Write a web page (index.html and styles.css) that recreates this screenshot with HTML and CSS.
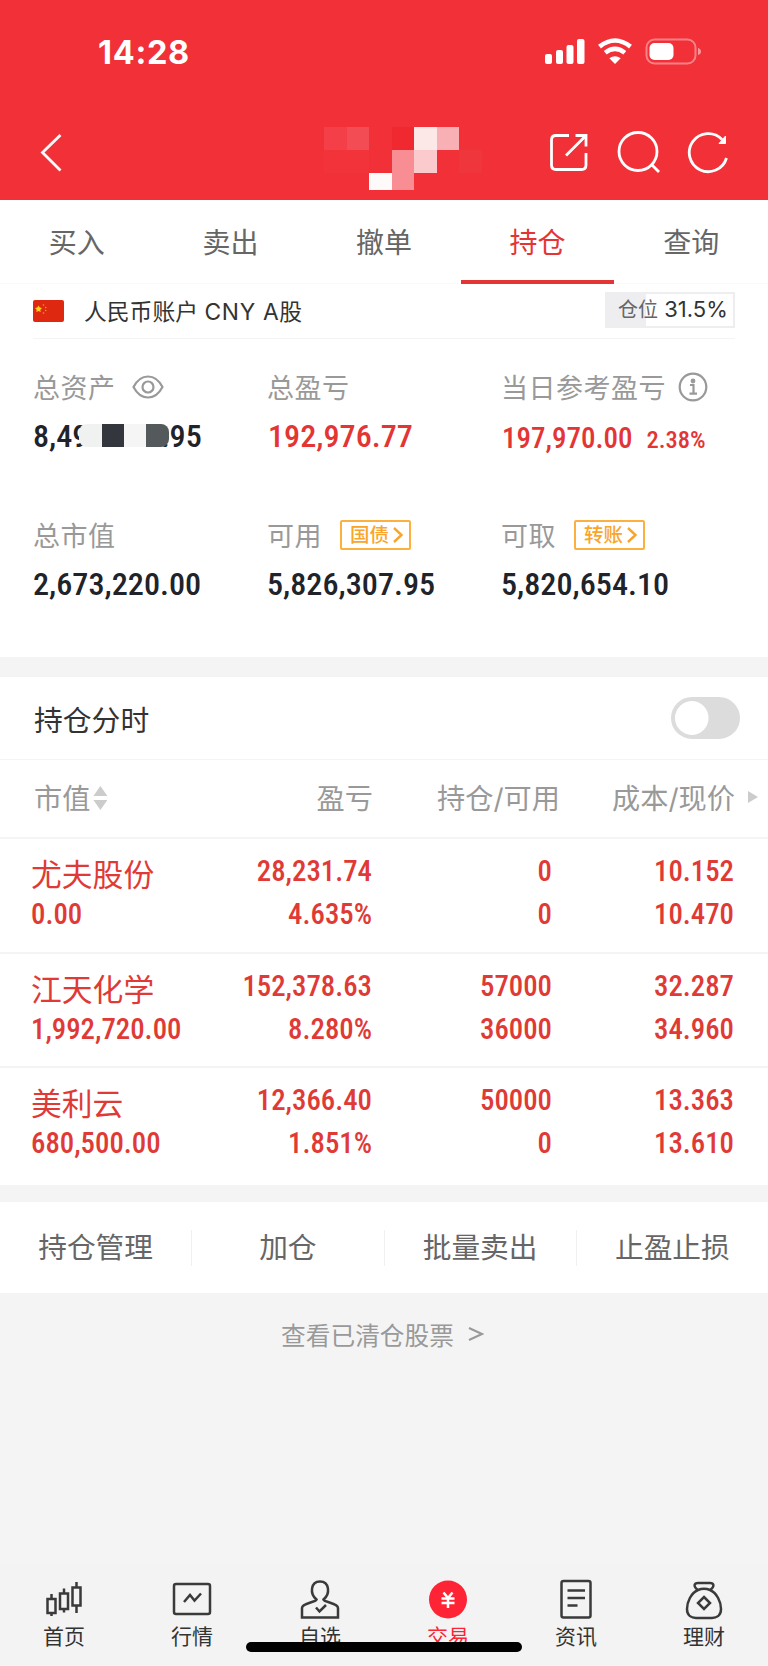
FILE: index.html
```
<!DOCTYPE html>

<html lang="zh-CN">
	<head>
		<meta charset="utf-8"/>
		<title>持仓</title>
		<link rel="stylesheet" href="styles.css">
	</head>
	<body>
		<header>
			<div id="statusBar">
				<div class="time">14:28</div>
				<svg class="statusIcons" width="160" height="30" viewBox="0 0 160 30">
					<g fill="#fff">
						<rect x="1" y="17" width="7" height="10" rx="2"/>
						<rect x="12" y="13" width="7" height="14" rx="2"/>
						<rect x="22.5" y="8" width="7" height="19" rx="2"/>
						<rect x="33" y="2" width="7.5" height="25" rx="2"/>
						<path d="M71 27 L65.3 21.3 Q71 17.3 76.700 21.300 Z"/>
					</g>
					<path d="M55.500 9.600 Q71 -2.600 86.500 9.600 M61.200 15.700 Q71 8 80.800 15.700" fill="none" stroke="#fff" stroke-width="4.600"/>
					<rect x="102.500" y="2.500" width="49" height="24" rx="8" fill="none" stroke="#fff" stroke-opacity=".4" stroke-width="2"/>
					<rect x="105.500" y="6" width="24" height="17" rx="5" fill="#fff"/>
					<path d="M154 11 Q157 12 157 14.500 Q157 17 154 18 Z" fill="#fff" fill-opacity=".5"/>
				</svg>
			</div>
			<div id="navBar">
				<svg class="back" width="26" height="42" viewBox="0 0 26 42"><path d="M22.500 3 L4.500 20.500 L22.500 38.500"/></svg>
				<div class="mosaic">
					<i class="m1"></i><i class="m2"></i><i></i><i class="m3"></i><i class="m4"></i><i class="m5"></i><i></i>
					<i class="m6"></i><i class="m6"></i><i></i><i class="m7"></i><i class="m8"></i><i></i><i class="m9"></i>
					<i></i><i></i><i class="m10"></i><i class="m7"></i><i></i><i></i><i></i>
				</div>
				<div class="navIcons">
					<svg width="44" height="44" viewBox="0 0 44 44"><path d="M22 4.500 H9 Q4.500 4.500 4.500 9 V34 Q4.500 38.500 9 38.500 H34.500 Q39 38.500 39 34 V22 M28.500 4.500 H39 V15.500 M38.500 5 L19 24.500"/></svg>
					<svg width="44" height="44" viewBox="0 0 44 44"><circle cx="21" cy="20.500" r="19"/><path d="M34 33 L42 41"/></svg>
					<svg width="44" height="44" viewBox="0 0 44 44"><path d="M39.500 27 A19 19 0 1 1 35 8.500"/><path d="M38.500 5 V12.500 H32 Z" fill="#fff" stroke-width="1"/></svg>
				</div>
			</div>
		</header>

		<nav id="tabs">
			<div>买入</div>
			<div>卖出</div>
			<div>撤单</div>
			<div class="active">持仓</div>
			<div>查询</div>
		</nav>

		<!--account summary-->
		<section id="summary">
			<div class="account">
				<svg class="flag" width="31" height="22" viewBox="0 0 31 22">
					<rect width="31" height="22" rx="2" fill="#de2910"/>
					<path d="M5.500 5.500 L6.700 7.600 L9 8 L7.300 9.700 L7.700 12 L5.500 11 L3.300 12 L3.700 9.700 L2 8 L4.300 7.600 Z" fill="#ffd21e"/>
					<g fill="#f0a020"><circle cx="10.500" cy="5" r=".8"/><circle cx="12.700" cy="7.500" r=".8"/><circle cx="12.700" cy="10.500" r=".8"/><circle cx="10.500" cy="13" r=".8"/></g>
				</svg>
				<span class="accountName">人民币账户 <span>CNY A</span>股</span>
				<div class="position"><span>仓位</span> 31.5%</div>
			</div>
			<div class="assets">
				<div class="asset">
					<div class="label">总资产
						<svg class="eye" width="32" height="24" viewBox="0 0 32 24"><path d="M1.500 12 Q7 1.500 16 1.500 Q25 1.500 30.500 12 Q25 22.500 16 22.500 Q7 22.500 1.500 12 Z"/><circle cx="16" cy="12" r="5.500"/></svg>
					</div>
					<div class="num masked">8,49<span class="mask"><i></i><i></i><i></i><i></i></span>.95</div>
				</div>
				<div class="asset">
					<div class="label">总盈亏</div>
					<div class="num up">192,976.77</div>
				</div>
				<div class="asset">
					<div class="label">当日参考盈亏
						<svg class="info" width="30" height="30" viewBox="0 0 30 30"><circle cx="15" cy="15" r="13.300"/><path d="M12 13 H15.500 V21.500 M11.500 21.700 H19"/><circle cx="15" cy="9" r="1.300"/></svg>
					</div>
					<div class="num up today">197,970.00<small>2.38%</small></div>
				</div>
				<div class="asset">
					<div class="label">总市值</div>
					<div class="num">2,673,220.00</div>
				</div>
				<div class="asset">
					<div class="label">可用 <span class="tag">国债<svg width="10" height="18" viewBox="0 0 10 18"><path d="M1 2 L8.500 9 L1 16"/></svg></span></div>
					<div class="num">5,826,307.95</div>
				</div>
				<div class="asset">
					<div class="label">可取 <span class="tag">转账<svg width="10" height="18" viewBox="0 0 10 18"><path d="M1 2 L8.500 9 L1 16"/></svg></span></div>
					<div class="num">5,820,654.10</div>
				</div>
			</div>
		</section>

		<!--holdings-->
		<section id="holdings">
			<div class="chartRow">持仓分时<div class="toggle"></div></div>
			<div class="row head">
				<div>市值<span class="sort"></span></div>
				<div>盈亏</div>
				<div>持仓/可用</div>
				<div>成本/现价</div>
				<span class="more"></span>
			</div>
			<div class="row">
				<div><b>尤夫股份</b><p>0.00</p></div>
				<div><p>28,231.74</p><p>4.635%</p></div>
				<div><p>0</p><p>0</p></div>
				<div><p>10.152</p><p>10.470</p></div>
			</div>
			<div class="row">
				<div><b>江天化学</b><p>1,992,720.00</p></div>
				<div><p>152,378.63</p><p>8.280%</p></div>
				<div><p>57000</p><p>36000</p></div>
				<div><p>32.287</p><p>34.960</p></div>
			</div>
			<div class="row">
				<div><b>美利云</b><p>680,500.00</p></div>
				<div><p>12,366.40</p><p>1.851%</p></div>
				<div><p>50000</p><p>0</p></div>
				<div><p>13.363</p><p>13.610</p></div>
			</div>
		</section>

		<section id="actions">
			<div>持仓管理</div>
			<div>加仓</div>
			<div>批量卖出</div>
			<div>止盈止损</div>
		</section>
		<div id="cleared">查看已清仓股票<svg width="16" height="16" viewBox="0 0 16 16"><path d="M1 2 L14 8 L1 14"/></svg></div>

		<footer>
			<div>
				<svg width="44" height="44" viewBox="0 0 44 44"><path d="M9.500 16 V21 M9.500 35 V38 M5.500 21 H13.500 V35 H5.500 Z M22 10.500 V15.500 M22 31 V34.500 M18 15.500 H26 V31 H18 Z M34.500 4 V9.500 M34.500 27.500 V35 M30.500 9.500 H38.500 V27.500 H30.500 Z"/></svg>
				首页
			</div>
			<div>
				<svg width="44" height="44" viewBox="0 0 44 44"><rect x="4" y="6" width="36" height="30" rx="2"/><path d="M14 24 L20 17 L24.500 22.500 L31 15.500"/></svg>
				行情
			</div>
			<div>
				<svg width="44" height="44" viewBox="0 0 44 44"><path d="M18.500 21.500 C11.500 16 12.500 3.500 22 3.500 C31.500 3.500 32.500 16 25.500 21.500 C26.500 24.500 40 25 40 30 V39.500 H4 V30 C4 25 17.500 24.500 18.500 21.500 Z M18 29.500 L21.500 33.500 L28 27"/></svg>
				自选
			</div>
			<div class="active">
				<svg width="44" height="44" viewBox="0 0 44 44"><circle cx="22" cy="21.500" r="19" fill="#fe2335" stroke="none"/><path d="M17.500 14.500 L22 20 L26.500 14.500 M15.500 20.500 H28.500 M15.500 25 H28.500 M22 20 V30" stroke="#fff"/></svg>
				交易
			</div>
			<div>
				<svg width="44" height="44" viewBox="0 0 44 44"><rect x="7.500" y="3" width="29" height="36.500" rx="2"/><path d="M13.500 12.500 H31 M13.500 20 H31 M13.500 27.500 H23.500"/></svg>
				资讯
			</div>
			<div>
				<svg width="44" height="44" viewBox="0 0 44 44"><path d="M16 12 C10.500 8 12.500 5 16 5 H28 C31.500 5 33.500 8 28 12 M16 12 Q22 9.500 28 12 C35 15 39 24 39 31 C39 38 34 40 30 40 H14 C10 40 5 38 5 31 C5 24 9 15 16 12 Z M22 19 L28 25 L22 31 L16 25 Z"/></svg>
				理财
			</div>
			<div class="homeBar"></div>
		</footer>
	</body>
</html>
```
FILE: styles.css
```
/*main layout*/
*{
	box-sizing: border-box;
}
body{
	display: flex;
	flex-direction: column;
	width:768px;
	height:1666px;
	margin: 0;
	background-color:#f4f4f4;
	color:#333;
	font-family: Inter, "Noto Sans CJK SC", sans-serif;
	overflow: hidden;
}
body > *{
	flex-shrink: 0;
}
svg{
	fill: none;
	flex-shrink: 0;
}
p{
	margin: 0;
}

/*red header*/
header{
	height:200px;
	background-color:#f13038;
	color:white;
}
#statusBar{
	display: flex;
	justify-content: space-between;
	height:105px;
	padding:37px 64px 0 98px;
}
.time{
	font-size:32.5px;
	font-weight:700;
	line-height:32px;
	letter-spacing:0.7px;
}
#navBar{
	display: flex;
	justify-content: space-between;
	align-items: flex-start;
	padding:22px 37px 0 38px;
}
#navBar svg{
	stroke: white;
	stroke-width: 2.8;
}
#navBar .back{
	margin-top:5px;
}
.mosaic{
	display: grid;
	grid-template-columns: repeat(7, 22.5px);
	grid-template-rows: 23px 23px 17px;
	margin-left:195px;
}
.m1{ background-color:#f43f48;}
.m2{ background-color:#f44c55;}
.m3{ background-color:#ef292f;}
.m4{ background-color:#fde8e8;}
.m5{ background-color:#f9b0b4;}
.m6{ background-color:#f2333a;}
.m7{ background-color:#f88e94;}
.m8{ background-color:#fbcacc;}
.m9{ background-color:#f0363d;}
.m10{ background-color:#fffafa;}
.navIcons{
	display: flex;
	gap:26px;
	padding-top:4px;
}

/*trade tabs*/
#tabs{
	display: flex;
	height:84px;
	background-color:white;
	border-bottom:solid 1px #fafafa;
}
#tabs div{
	flex: 1;
	height:84px;
	line-height:86px;
	font-size:28px;
	text-align:center;
	color:#666;
}
#tabs .active{
	color:#e43535;
	border-bottom:solid 4px #e43535;
}

/*account summary*/
#summary{
	height:373px;
	padding:0 33px;
	background-color:white;
}
.account{
	display: flex;
	align-items: center;
	height:55px;
	border-bottom:solid 1px #f4f4f4;
}
.accountName{
	flex: 1;
	margin:-2px 0 0 20px;
	font-size:22.8px;
}
.accountName span{
	letter-spacing:0.7px;
}
.position{
	width:130px;
	height:36px;
	margin-top:-3px;
	padding-left:11px;
	border:solid 2px #eeeef1;
	background: linear-gradient(to right, #eeeef1 39px, white 39px);
	font-size:22px;
	line-height:31px;
	white-space: nowrap;
}
.position span{
	font-size:20px;
	color:#666;
}
.assets{
	display: grid;
	grid-template-columns: 234px 234px 1fr;
	grid-template-rows: 148px 148px;
	padding-top:28px;
}
.label{
	display: flex;
	align-items: center;
	height:39px;
	font-size:27px;
	letter-spacing:0.5px;
	color:#999;
	white-space: nowrap;
}
.label svg{
	stroke: #999;
	stroke-width: 2.2;
}
.eye{
	margin-left:16px;
}
.info{
	margin-left:12px;
}
.num{
	height:60px;
	line-height:61px;
	font-family: Roboto, sans-serif;
	font-weight:500;
	font-stretch:87%;
	font-size:32.2px;
	color:#20232a;
	white-space: nowrap;
}
.up{
	padding-left:1px;
	color:#e43535;
}
.today{
	font-size:29px;
	line-height:65px;
}
.num small{
	margin-left:14px;
	font-size:24.5px;
}
.masked{
	display: flex;
}
.mask{
	display: flex;
	align-self: flex-start;
	height:23px;
	margin:18px -8px 0 -9px;
	border-radius:8px;
	overflow: hidden;
	position: relative;
}
.mask i{
	width:22.3px;
	background-color:#f0f2f2;
}
.mask i:nth-child(2){ background-color:#33373d;}
.mask i:nth-child(3){ background-color:#f5f5f5;}
.mask i:nth-child(4){ background-color:#54595c;}
.tag{
	display: flex;
	align-items: center;
	gap:4px;
	width:71px;
	height:30px;
	margin-left:18px;
	padding-left:8px;
	border:solid 2px #fbb03f;
	border-radius:2px;
	font-size:19.5px;
	font-weight:500;
	line-height:24px;
	letter-spacing:0;
	color:#f9a52b;
}
.tag svg{
	stroke: #f9a52b;
	stroke-width: 2.4;
}

/*holdings*/
#holdings{
	height:508px;
	margin-top:20px;
	background-color:white;
}
.chartRow{
	display: flex;
	justify-content: space-between;
	align-items: center;
	height:83px;
	padding:0 28px 0 34px;
	border-bottom:solid 1px #f4f4f4;
	font-size:28.8px;
}
.toggle{
	width:69px;
	height:42px;
	border:solid 4px #dcdcdc;
	border-radius:21px;
	background: radial-gradient(circle at 16.5px 17px, white 16.5px, #dcdcdc 17.5px);
}
.row{
	display: grid;
	grid-template-columns: 191px 150px 180px 182px;
	position: relative;
	height:114.5px;
	padding:11px 33px 0 31px;
	border-bottom:solid 2px #f4f4f4;
	color:#e03a36;
	text-align:right;
}
.row:last-child{
	border-bottom:none;
}
.row div:first-child{
	text-align:left;
}
.row b{
	display: block;
	height:43px;
	line-height:50px;
	font-weight:400;
	font-size:30.8px;
}
.row p{
	height:43px;
	line-height:43px;
	font-family: Roboto, sans-serif;
	font-weight:500;
	font-stretch:87%;
	font-size:28.8px;
}
.head{
	grid-template-columns: 190px 149px 187px 175px;
	height:79px;
	padding:0 33px 0 34px;
	line-height:79px;
	font-size:28.2px;
	color:#999;
}
.sort{
	display: inline-block;
	width:14px;
	height:24px;
	margin-left:3px;
	vertical-align: -1px;
	background-color:#ccc;
	clip-path: polygon(50% 0, 100% 42%, 0 42%, 0 58%, 100% 58%, 50% 100%, 0 58%, 0 42%);
}
.more{
	position: absolute;
	right:10px;
	top:31px;
	border-left:solid 10px #ccc;
	border-top:solid 6.5px transparent;
	border-bottom:solid 6.5px transparent;
}

/*actions*/
#actions{
	display: flex;
	align-items: center;
	height:91px;
	margin-top:17px;
	background-color:white;
}
#actions div{
	flex: 1;
	height:36px;
	line-height:35px;
	border-right:solid 1px #f0f0f0;
	font-size:28.7px;
	text-align:center;
	color:#666;
}
#actions div:last-child{
	border-right:none;
}
#cleared{
	display: flex;
	justify-content: center;
	align-items: center;
	gap:14px;
	height:82px;
	padding-right:3px;
	font-size:24.7px;
	color:#999;
}
#cleared svg{
	stroke: #999;
	stroke-width: 2;
}

/*bottom bar*/
footer{
	display: flex;
	position: relative;
	height:103px;
	margin-top:auto;
	padding-top:15px;
	background-color:#f3f3f3;
}
footer div{
	display: flex;
	flex-direction: column;
	align-items: center;
	width:128px;
	font-size:21px;
	line-height:30px;
}
footer svg{
	stroke: #3a3a3a;
	stroke-width: 2.5;
}
footer .active{
	color:#fe2335;
}
footer .homeBar{
	position: absolute;
	left:246px;
	top:79px;
	width:276px;
	height:10px;
	border-radius:5px;
	background-color:black;
}
```
